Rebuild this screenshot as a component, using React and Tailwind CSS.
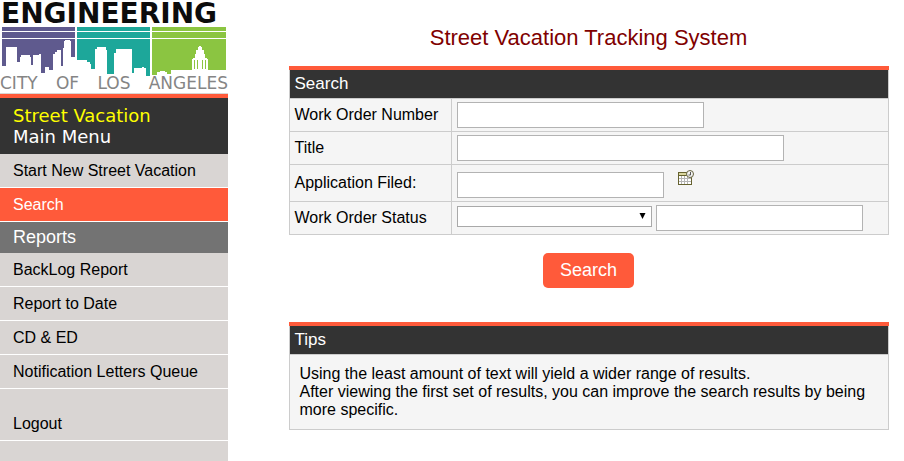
import React from "react";

function Logo() {
  return (
    <div className="flex h-[93px] flex-col bg-white">
      <div className="h-[27px] pl-px font-['DejaVu_Sans','Verdana',sans-serif] text-[28px] leading-[28px] font-bold text-[#0c0c0c]">
        ENGINEERING
      </div>
      <svg viewBox="0 27 228 49" className="block w-full" role="img" aria-label="Los Angeles skyline" shapeRendering="crispEdges">
        <path fill="#5f5a8e" d="M1.500 27H75V57H71V41H70V40H65V41H64V48H63V66H61V50H57V52H55V54H53V70H49V67H45V73H41V54H39V55H33V65H31V57H30V55H21V57H20V62H17V47H6V66H1.500Z" />
        <path fill="#1da79a" d="M77 27H150V76H146V68H144V67H142V68H134V73H132V49H116V53H114V74H107V50H106V47H97V49H95V69H91V64H90V62H87V60H77Z" />
        <path fill="#8bc541" d="M152 27H226V70H171V74H167V72H165V71H160V72H157V75H152Z" />
        <path fill="#fff" d="M0 31h228v1H0zM0 38h228v1H0z" />
        <path
          fill="#fff"
          d="M199 46h2v1h1v3h2v4h1v4h2v1h1v12h-16V59h1v-1h2v-4h1v-4h2v-3h1z"
        />
        <path fill="#8bc541" d="M194 60h1v9h-1zM197 60h1v9h-1zM202 60h1v9h-1zM205 60h1v9h-1z" />
      </svg>
      <div className="flex h-4 justify-between font-['DejaVu_Sans','Verdana',sans-serif] text-[17px] leading-[14px] text-[#858585]">
        <span>CITY</span>
        <span>OF</span>
        <span>LOS</span>
        <span>ANGELES</span>
      </div>
    </div>
  );
}

function MenuLink({ children, active = false }) {
  return (
    <a
      href="#"
      className={
        active
          ? "block border-b border-white bg-[#ff5a3a] pl-[13px] leading-[33px] text-white"
          : "block border-b border-white pl-[13px] leading-[33px]"
      }
    >
      {children}
    </a>
  );
}

function Sidebar() {
  return (
    <aside className="min-h-screen w-[228px] shrink-0 bg-[#d9d5d3]">
      <Logo />
      <div className="mt-px border-t-4 border-[#ff5a3a] bg-[#333] px-[13px] pt-[7px] pb-[7px] font-['DejaVu_Sans','Verdana',sans-serif] text-[18px] leading-[21px] text-white">
        <div className="text-[#ff0]">Street Vacation</div>
        <div>Main Menu</div>
      </div>
      <nav>
        <MenuLink>Start New Street Vacation</MenuLink>
        <MenuLink active>Search</MenuLink>
        <h2 className="bg-[#737373] pl-[13px] text-[18px] leading-[31px] text-white">Reports</h2>
        <MenuLink>BackLog Report</MenuLink>
        <MenuLink>Report to Date</MenuLink>
        <MenuLink>CD &amp; ED</MenuLink>
        <MenuLink>Notification Letters Queue</MenuLink>
        <div className="pt-[18px]">
          <MenuLink>Logout</MenuLink>
        </div>
      </nav>
    </aside>
  );
}

function CalendarIcon() {
  return (
    <svg width="16" height="16" viewBox="0 0 16 16" aria-hidden="true">
      <rect x="0.500" y="2.500" width="13" height="12" fill="#fff" stroke="#66622f" />
      <path fill="#d9d6a0" d="M1 3h12v2H1z" />
      <path fill="#66622f" d="M1 5h12v1H1z" />
      <path stroke="#b5b5b5" d="M3.500 6v8M6.500 6v8M9.500 6v8M1 8.500h12M1 11.500h12" />
      <circle cx="12" cy="4" r="3.500" fill="#f4f4f4" stroke="#66633f" />
      <path fill="none" stroke="#555" d="M12.500 2v3h-2" />
    </svg>
  );
}

const field = "h-[26px] border border-[#b3b3b3] bg-white px-1 outline-none";
const labelCell = "w-[162px] border-r border-b border-[#ccc] pl-[5px] text-left font-normal";
const valueCell = "border-r border-b border-[#ccc] px-[5px] py-[3px]";
const headCell = "h-[29px] border-r border-b border-[#ccc] bg-[#333] pl-[5px] text-left text-[17px] leading-[28px] font-normal text-white";

function SearchForm() {
  return (
    <form className="w-full" onSubmit={(e) => e.preventDefault()}>
      <div className="border-t-4 border-[#ff5a3a]">
        <table className="w-full table-fixed border-separate border-spacing-0 border-l border-[#ccc] bg-[#f5f5f5] leading-[18px]">
          <colgroup>
            <col className="w-[162px]" />
            <col />
          </colgroup>
          <thead>
            <tr>
              <th colSpan={2} className={headCell}>Search</th>
            </tr>
          </thead>
          <tbody>
            <tr>
              <th scope="row" className={labelCell}><label htmlFor="number">Work Order Number</label></th>
              <td className={valueCell}>
                <input id="number" type="text" className={`${field} block w-[247px]`} />
              </td>
            </tr>
            <tr>
              <th scope="row" className={labelCell}><label htmlFor="title">Title</label></th>
              <td className={valueCell}>
                <input id="title" type="text" className={`${field} block w-[327px]`} />
              </td>
            </tr>
            <tr>
              <th scope="row" className={labelCell}><label htmlFor="filed">Application Filed:</label></th>
              <td className={valueCell}>
                <div className="flex items-start gap-[14px] pt-[2px]">
                  <input id="filed" type="text" className={`${field} mt-[2px] w-[207px]`} />
                  <button type="button" aria-label="Pick a date"><CalendarIcon /></button>
                </div>
              </td>
            </tr>
            <tr>
              <th scope="row" className={labelCell}><label htmlFor="status">Work Order Status</label></th>
              <td className={valueCell}>
                <div className="flex items-start gap-1">
                  <div className="grid w-[195px]">
                    <select id="status" className="col-start-1 row-start-1 mt-px h-[21px] appearance-none border border-[#a9a9a9] bg-white px-1 outline-none">
                      <option></option>
                    </select>
                    <svg width="7" height="6" viewBox="0 0 7 6" className="pointer-events-none col-start-1 row-start-1 mr-[6px] self-center justify-self-end" aria-hidden="true">
                      <path d="M0.500 0h6L3.500 6z" />
                    </svg>
                  </div>
                  <input type="text" aria-label="Status text" className={`${field} w-[207px]`} />
                </div>
              </td>
            </tr>
          </tbody>
        </table>
      </div>
      <div className="flex justify-center pt-[18px]">
        <button type="submit" className="h-[35px] w-[91px] rounded-[5px] bg-[#ff5a3a] text-[18px] leading-[35px] text-white">
          Search
        </button>
      </div>
    </form>
  );
}

function Tips() {
  return (
    <section className="mt-[34px] w-full border-t-4 border-[#ff5a3a]">
      <div className="border-x border-b border-[#ccc] bg-[#f5f5f5]">
        <h2 className="h-[29px] border-b border-[#ccc] bg-[#333] pl-[5px] text-[17px] leading-[28px] text-white">Tips</h2>
        <p className="px-[10px] pt-[10px] pb-[10px] leading-[18px]">
          Using the least amount of text will yield a wider range of results.
          <br />
          After viewing the first set of results, you can improve the search results by being more specific.
        </p>
      </div>
    </section>
  );
}

export default function App() {
  return (
    <div className="flex min-h-screen bg-white font-['Liberation_Sans',Arial,sans-serif] text-[16px] text-black">
      <Sidebar />
      <main className="flex min-w-0 flex-1 justify-center pl-[45px]">
        <div className="w-full max-w-[600px]">
          <h1 className="pt-[26px] pb-[16px] text-center text-[22px] leading-[24px] text-[#800000]">
            Street Vacation Tracking System
          </h1>
          <SearchForm />
          <Tips />
        </div>
      </main>
    </div>
  );
}
